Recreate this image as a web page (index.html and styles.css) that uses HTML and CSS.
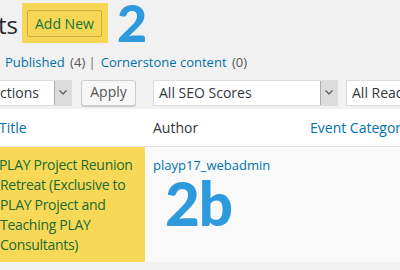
FILE: index.html
```html
<!DOCTYPE html>
<html lang="en">
  <head>
    <meta charset="UTF-8" />
    <title>Events</title>
    <link rel="stylesheet" href="styles.css">
  </head>
  <body>
    <div class="wrap">
      <div class="page-head">
        <h1 class="page-title">ts</h1>
        <div class="highlight">
          <a class="add-new" href="#">Add New</a>
        </div>
        <span class="step">2</span>
      </div>

      <ul class="subsubsub">
        <li><a href="#">Published <span class="count">(4)</span></a> |</li>
        <li><a href="#">Cornerstone content</a> <span class="count">(0)</span></li>
      </ul>

      <div class="tablenav">
        <div class="select select-bulk">
          <span class="select-text">ctions</span>
          <span class="select-arrow"><svg width="8" height="5" viewBox="0 0 8 5"><path d="M0.5 0.5 L4 4 L7.5 0.5" fill="none" stroke="#555" stroke-width="1.2"/></svg></span>
        </div>
        <button class="button" type="button">Apply</button>
        <div class="select select-seo">
          <span class="select-text">All SEO Scores</span>
          <span class="select-arrow"><svg width="8" height="5" viewBox="0 0 8 5"><path d="M0.5 0.5 L4 4 L7.5 0.5" fill="none" stroke="#555" stroke-width="1.2"/></svg></span>
        </div>
        <div class="select select-read">
          <span class="select-text">All Read</span>
        </div>
      </div>

      <table class="list-table">
        <thead>
          <tr>
            <th class="col-title"><a href="#">Title</a></th>
            <th class="col-author">Author</th>
            <th class="col-cat"><a href="#">Event Categori</a></th>
          </tr>
        </thead>
        <tbody>
          <tr>
            <td class="col-title cell-marked">PLAY Project Reunion Retreat (Exclusive to PLAY Project and Teaching PLAY Consultants)</td>
            <td class="col-author">
              <a href="#">playp17_webadmin</a>
              <span class="step step-b">2b</span>
            </td>
            <td class="col-cat"></td>
          </tr>
        </tbody>
      </table>
    </div>
  </body>
</html>
```

FILE: styles.css
```css
html, body {
  margin: 0;
  padding: 0;
}

body {
  background: #f1f1f1;
  font-family: "Open Sans", "Noto Sans", sans-serif;
  font-size: 13px;
  color: #444;
}

.wrap {
  width: 400px;
  height: 270px;
  overflow: hidden;
}

a {
  color: #0073aa;
  text-decoration: none;
}

/* Titre + bouton surligné */
.page-head {
  display: flex;
  align-items: center;
  height: 46px;
}

.page-title {
  margin: 2px 4px 0 -2px;
  font-size: 24px;
  font-weight: 400;
  color: #23282d;
}

.highlight {
  background: #f6d755;
  padding: 7px 6px 6px 5px;
}

.add-new {
  display: block;
  border: 1px solid #c9ad3e;
  border-radius: 2px;
  padding: 4px 7px 4px 7px;
  font-size: 14px;
  font-weight: 500;
  color: #14733d;
  line-height: 17px;
}

.step {
  margin-left: 9px;
  font-family: Lato, "DejaVu Sans", sans-serif;
  font-weight: 900;
  font-size: 52px;
  line-height: 1;
  color: #2e9ade;
  margin-top: -2px;
}

/* Filtres */
.subsubsub {
  list-style: none;
  margin: 6px 0 0 5px;
  padding: 0;
  display: flex;
  gap: 5px;
  line-height: 20px;
  color: #666;
}

.subsubsub .count {
  color: #555;
  margin-left: 2px;
}

.tablenav {
  display: flex;
  align-items: center;
  gap: 8px;
  margin-top: 7px;
  height: 27px;
}

.select {
  flex-shrink: 0;
  display: flex;
  height: 26px;
  background: #fff;
  border: 1px solid #ddd;
  box-sizing: border-box;
  align-items: stretch;
}

.select-text {
  flex: 1;
  padding-left: 5px;
  font-size: 14px;
  line-height: 24px;
  color: #32373c;
  white-space: nowrap;
  overflow: hidden;
}

.select-arrow {
  width: 16px;
  background: #dcdcdc;
  border-left: 1px solid #aaa;
  display: flex;
  align-items: center;
  justify-content: center;
}

.select-bulk {
  width: 72px;
  border-left: none;
}

.select-bulk .select-text {
  padding-left: 0;
}

.select-seo {
  width: 185px;
  margin-left: 9px;
}

.select-read {
  width: 120px;
}

.button {
  flex-shrink: 0;
  width: 55px;
  height: 26px;
  margin-left: 1px;
  background: #f7f7f7;
  border: 1px solid #ccc;
  border-radius: 3px;
  box-shadow: 0 1px 0 #ccc;
  font-family: inherit;
  font-size: 14px;
  color: #555;
  padding: 0 0 2px 0;
  cursor: pointer;
}

/* Tableau */
.list-table {
  border-collapse: collapse;
  width: 420px;
  margin-top: 3px;
  table-layout: fixed;
}

.list-table th {
  background: #fff;
  font-weight: 400;
  text-align: left;
  height: 37px;
  padding: 0;
  font-size: 14px;
  color: #32373c;
  border-bottom: 1px solid #e1e1e1;
  white-space: nowrap;
  overflow: hidden;
}

.list-table td {
  background: #f9f9f9;
  vertical-align: top;
  padding: 0;
}

.col-title {
  width: 145px;
}

.col-author {
  width: 157px;
}

th.col-title a {
  display: block;
  margin-left: -1px;
}

th.col-author {
  padding-left: 8px;
}

td.cell-marked {
  background: #f7d957;
  color: #1a6a32;
  font-size: 14px;
  font-weight: 500;
  line-height: 20px;
  letter-spacing: -0.3px;
  padding: 8px 0 7px 0;
  text-indent: -1px;
}

td.col-author {
  padding: 8px 0 0 8px;
}

td.col-author a {
  display: block;
  line-height: 20px;
}

.step-b {
  display: block;
  margin: 4px 0 0 12px;
  font-size: 60px;
  line-height: 48px;
  letter-spacing: -1px;
}
```
